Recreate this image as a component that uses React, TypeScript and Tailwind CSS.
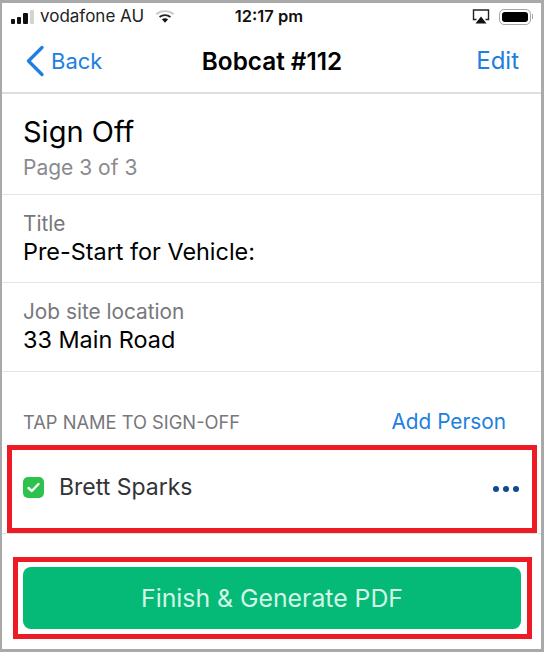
const font = { fontFamily: "Inter, 'Liberation Sans', sans-serif" };

const SignalBars = () => (
  <div className="flex items-end gap-[2px] h-[14px]">
    <div className="w-[4px] h-[5px] rounded-[1px] bg-[#111]" />
    <div className="w-[4px] h-[7px] rounded-[1px] bg-[#111]" />
    <div className="w-[5px] h-[11px] rounded-[1px] bg-[#111]" />
    <div className="w-[4px] h-[14px] rounded-[1px] bg-[#d4d4d4]" />
  </div>
);

const Wifi = () => (
  <svg width="20" height="15" viewBox="0 0 22 16" fill="none">
    <path d="M1.5 5.5C6.8 1 15.2 1 20.5 5.5" stroke="#c9c9c9" strokeWidth="2" />
    <path d="M5 8.5C8.4 5.8 13.6 5.8 17 8.5" stroke="#222" strokeWidth="2" />
    <path d="M7.6 11C9.6 9.6 12.4 9.6 14.4 11L11 14.8Z" fill="#111" />
  </svg>
);

const Airplay = () => (
  <svg width="18" height="15" viewBox="0 0 18 15" fill="none">
    <path d="M4.5 10.5H1.5V1H16.5V10.5H13.5" stroke="#222" strokeWidth="1.4" />
    <path d="M9 7.5L14.5 14.5H3.5Z" fill="#111" />
  </svg>
);

const Battery = () => (
  <div className="flex items-center">
    <div className="w-[32px] h-[16px] rounded-[5px] border border-[#a8a8a8] p-[2px]">
      <div className="w-full h-full rounded-[3px] bg-black" />
    </div>
    <div className="w-[1px] h-[5px] bg-[#a8a8a8] ml-[1px]" />
  </div>
);

export default function App() {
  return (
    <div
      className="w-[544px] h-[652px] overflow-hidden bg-white border-t-[3px] border-l-[2px] border-r-[3px] border-b-[3px] border-[#a9a9a9] text-black"
      style={font}
    >
      {/* status bar */}
      <div className="h-[27px] flex items-center justify-between pl-[9px] pr-[8px] text-[16.5px] leading-none">
        <div className="flex items-center w-[217px]">
          <SignalBars />
          <span className="ml-[6px] text-[17px] text-[#222]">vodafone AU</span>
          <span className="ml-[11px]"><Wifi /></span>
        </div>
        <span className="font-semibold text-[#111]">12:17 pm</span>
        <div className="flex items-center justify-end gap-[9px] w-[223px]">
          <Airplay />
          <Battery />
        </div>
      </div>

      {/* nav */}
      <div className="h-[64px] flex items-center justify-between border-b-2 border-[#dedede] pl-[23px] pr-[22px]">
        <div className="flex items-center w-[120px] text-[#2080e0]">
          <svg width="20" height="32" viewBox="0 0 20 32" fill="none">
            <path d="M17 2.5L3.5 16L17 29.5" stroke="#2080e0" strokeWidth="3.4" strokeLinecap="round" strokeLinejoin="round" />
          </svg>
          <span className="ml-[6px] text-[22px] leading-none">Back</span>
        </div>
        <span className="text-[24.3px] font-semibold leading-none">Bobcat #112</span>
        <span className="w-[120px] text-right text-[24px] leading-none text-[#2080e0]">Edit</span>
      </div>

      {/* heading */}
      <div className="h-[101px] border-b border-[#e4e4e4] pl-[21px] pt-[20px]">
        <div className="text-[29px] leading-[36px]">Sign Off</div>
        <div className="text-[21px] leading-[35px] text-[#8a8a8e]">Page 3 of 3</div>
      </div>

      {/* fields */}
      <div className="h-[88px] border-b border-[#e4e4e4] pl-[21px] pt-[15px]">
        <div className="text-[20.8px] leading-[28px] text-[#77777c]">Title</div>
        <div className="text-[23.4px] leading-[28px]">Pre-Start for Vehicle:</div>
      </div>
      <div className="h-[89px] border-b border-[#e4e4e4] pl-[21px] pt-[15px]">
        <div className="text-[20.8px] leading-[28px] text-[#77777c]">Job site location</div>
        <div className="text-[23.4px] leading-[28px]">33 Main Road</div>
      </div>

      {/* sign-off */}
      <div className="h-[73px] flex items-end justify-between pl-[21px] pr-[35px] pb-[11px]">
        <span className="text-[18.3px] leading-[24px] text-[#77777c]">TAP NAME TO SIGN-OFF</span>
        <span className="text-[20.8px] leading-[24px] text-[#2080e0]">Add Person</span>
      </div>

      <div className="border-b border-[#e4e4e4]">
        <div className="h-[88px] ml-[5px] w-[530px] border-[5px] border-[#ed1c24] flex items-center justify-between pl-[11px] pr-[13px] pb-[4px]">
          <div className="flex items-center">
            <div className="w-[21px] h-[21px] rounded-[5px] bg-[#2dc24e] flex items-center justify-center">
              <svg width="13" height="11" viewBox="0 0 13 11" fill="none">
                <path d="M1.5 6L4.8 9L11.5 2" stroke="white" strokeWidth="2.4" strokeLinecap="round" strokeLinejoin="round" />
              </svg>
            </div>
            <span className="ml-[15px] text-[23px] leading-none text-[#333338]">Brett Sparks</span>
          </div>
          <div className="flex gap-[4px] mt-[4px]">
            <div className="w-[6px] h-[6px] rounded-full bg-[#0d4a8f]" />
            <div className="w-[6px] h-[6px] rounded-full bg-[#0d4a8f]" />
            <div className="w-[6px] h-[6px] rounded-full bg-[#0d4a8f]" />
          </div>
        </div>
      </div>

      {/* finish button */}
      <div className="mt-[23px] ml-[11px] w-[519px] h-[82px] border-[5px] border-[#ed1c24] pt-[5px] pl-[5px]">
        <div className="w-[498px] h-[62px] rounded-[8px] bg-[#05ba76] flex items-center justify-center text-[24.8px] leading-none text-[#d5f5e8]">
          Finish &amp; Generate PDF
        </div>
      </div>
    </div>
  );
}
